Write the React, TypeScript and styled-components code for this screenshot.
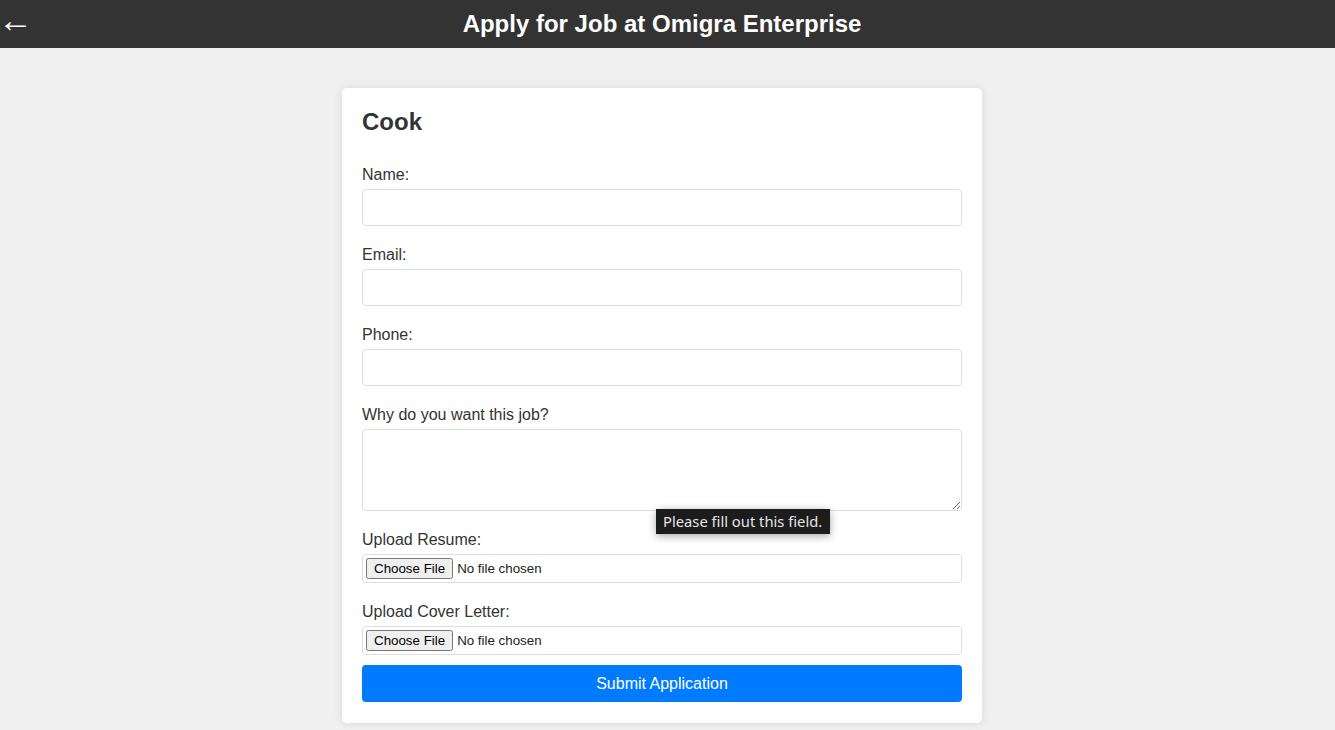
import React from "react";
import styled, { createGlobalStyle } from "styled-components";

const Global = createGlobalStyle`
  html, body { margin: 0; padding: 0; }
  body {
    background: #f0f0f0;
    font-family: "Liberation Sans", Arial, sans-serif;
    color: #333;
  }
  * { box-sizing: border-box; }
`;

const Header = styled.header`
  height: 48px;
  background: #333;
  color: #fff;
  position: relative;
  display: flex;
  align-items: center;
  justify-content: center;
  padding-right: 11px;
`;

const BackButton = styled.button`
  position: absolute;
  left: -2px;
  top: 2px;
  background: none;
  border: none;
  color: #fff;
  font-family: "Liberation Sans", Arial, sans-serif;
  font-size: 35px;
  line-height: 36px;
  padding: 0;
  cursor: pointer;
`;

const Title = styled.h1`
  margin: 0;
  font-size: 24px;
  font-weight: bold;
  line-height: 28px;
`;

const Main = styled.main`
  display: flex;
  justify-content: center;
  padding: 40px 11px 7px 0;
`;

const Card = styled.div`
  width: 640px;
  background: #fff;
  border-radius: 5px;
  box-shadow: 0 0 10px rgba(0, 0, 0, 0.1);
  padding: 20px 20px 21px;
`;

const JobTitle = styled.h2`
  margin: 0 0 30px;
  font-size: 24px;
  line-height: 28px;
  font-weight: bold;
  color: #333;
`;

const Form = styled.form`
  display: flex;
  flex-direction: column;
`;

const Group = styled.div`
  position: relative;
  display: flex;
  flex-direction: column;
  margin-bottom: ${(p: { $mb?: number }) => (p.$mb ?? 20)}px;
`;

const Label = styled.label`
  font-size: 16px;
  line-height: 18px;
  margin-bottom: 5px;
  color: #333;
`;

const TextInput = styled.input`
  width: 100%;
  height: 37px;
  border: 1px solid #ddd;
  border-radius: 4px;
  padding: 8px 10px;
  font-size: 16px;
  font-family: "Liberation Sans", Arial, sans-serif;
  background: #fff;
`;

const TextArea = styled.textarea`
  width: 100%;
  height: 82px;
  border: 1px solid #ddd;
  border-radius: 4px;
  padding: 8px 10px;
  font-size: 16px;
  font-family: "Liberation Sans", Arial, sans-serif;
  display: block;
  resize: vertical;
`;

const FileInput = styled.input`
  width: 100%;
  height: 29px;
  border: 1px solid #ddd;
  border-radius: 4px;
  padding: 3px;
  font-size: 13.33px;
  font-family: "Liberation Sans", Arial, sans-serif;
  color: #222;
  background: #fff;
`;

const Submit = styled.button`
  width: 100%;
  height: 37px;
  background: #007bff;
  color: #fff;
  border: none;
  border-radius: 4px;
  font-size: 16px;
  font-family: "Liberation Sans", Arial, sans-serif;
  cursor: pointer;
`;

const Bubble = styled.div`
  position: absolute;
  left: 294px;
  top: 103px;
  height: 25px;
  padding: 0 8px 0 7px;
  background: #1c1c1c;
  color: #e6e6e6;
  font-family: "Noto Sans", "DejaVu Sans", sans-serif;
  font-size: 14.75px;
  line-height: 25px;
  white-space: nowrap;
  box-shadow: 0 2px 8px rgba(0, 0, 0, 0.35);
  z-index: 5;
`;

export default function App() {
  return (
    <>
      <Global />
      <Header>
        <BackButton aria-label="Back">←</BackButton>
        <Title>Apply for Job at Omigra Enterprise</Title>
      </Header>
      <Main>
        <Card>
          <JobTitle>Cook</JobTitle>
          <Form onSubmit={(e) => e.preventDefault()}>
            <Group>
              <Label htmlFor="name">Name:</Label>
              <TextInput id="name" type="text" />
            </Group>
            <Group>
              <Label htmlFor="email">Email:</Label>
              <TextInput id="email" type="email" />
            </Group>
            <Group>
              <Label htmlFor="phone">Phone:</Label>
              <TextInput id="phone" type="tel" />
            </Group>
            <Group>
              <Label htmlFor="why">Why do you want this job?</Label>
              <TextArea id="why" />
              <Bubble>Please fill out this field.</Bubble>
            </Group>
            <Group>
              <Label htmlFor="resume">Upload Resume:</Label>
              <FileInput id="resume" type="file" />
            </Group>
            <Group $mb={10}>
              <Label htmlFor="cover">Upload Cover Letter:</Label>
              <FileInput id="cover" type="file" />
            </Group>
            <Submit type="submit">Submit Application</Submit>
          </Form>
        </Card>
      </Main>
    </>
  );
}
